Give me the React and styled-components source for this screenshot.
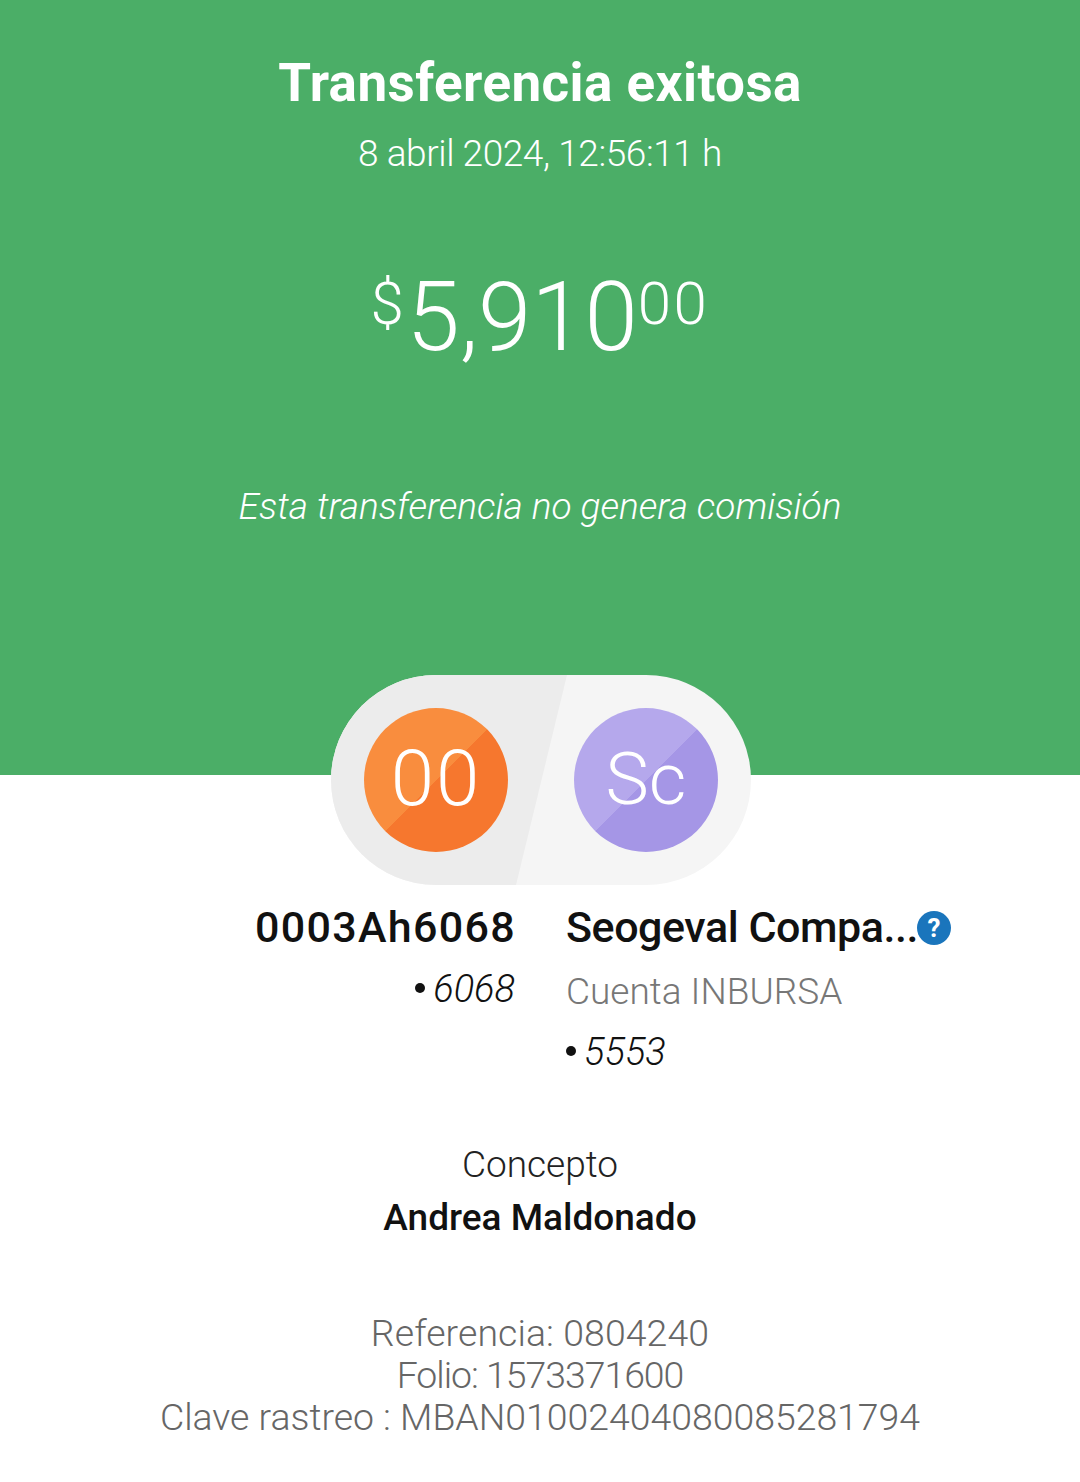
import React from 'react';
import styled, { createGlobalStyle } from 'styled-components';

const GlobalStyle = createGlobalStyle`
  html, body {
    margin: 0;
    padding: 0;
    background: #fff;
  }
  body {
    font-family: 'Roboto', 'Liberation Sans', sans-serif;
  }
`;

const App = () => {
  return (
    <Page>
      <GlobalStyle />
      <Header>
        <Title>Transferencia exitosa</Title>
        <DateText>8 abril 2024, 12:56:11 h</DateText>
        <Amount>
          <Sup>$</Sup>5,910<Sup>00</Sup>
        </Amount>
        <Note>Esta transferencia no genera comisión</Note>
      </Header>
      <Pill>
        <Avatar $light="#f98d3e" $dark="#f6772e" $size={78} $spacing={2}>00</Avatar>
        <Avatar $light="#b5a8ec" $dark="#a596e6" $size={73} $spacing={0}>Sc</Avatar>
      </Pill>
      <Accounts>
        <FromCol>
          <AccountName $spacing={1.3}>0003Ah6068</AccountName>
          <Digits $top={10}>6068</Digits>
        </FromCol>
        <ToCol>
          <NameRow>
            <AccountName $spacing={-0.45}>Seogeval Compa...</AccountName>
            <HelpIcon>?</HelpIcon>
          </NameRow>
          <Bank>Cuenta INBURSA</Bank>
          <Digits $top={8}>5553</Digits>
        </ToCol>
      </Accounts>
      <Concept>
        <ConceptLabel>Concepto</ConceptLabel>
        <ConceptValue>Andrea Maldonado</ConceptValue>
      </Concept>
      <Details>
        <DetailRow $spacing={0.1}>Referencia: 0804240</DetailRow>
        <DetailRow $spacing={-1}>Folio: 1573371600</DetailRow>
        <DetailRow $spacing={0}>Clave rastreo : MBAN01002404080085281794</DetailRow>
      </Details>
    </Page>
  );
};

const Page = styled.div`
  width: 1080px;
  height: 1482px;
  overflow: hidden;
  background: #fff;
`;

const Header = styled.div`
  box-sizing: border-box;
  height: 775px;
  padding-top: 54px;
  background: #4bae67;
  color: #fff;
  text-align: center;
`;

const Title = styled.div`
  font-size: 53px;
  font-weight: 700;
  line-height: 58px;
  letter-spacing: 0.43px;
`;

const DateText = styled.div`
  margin-top: 20px;
  font-size: 37px;
  font-weight: 300;
  line-height: 44px;
  letter-spacing: -0.43px;
`;

const Amount = styled.div`
  margin-top: 86px;
  font-size: 96px;
  font-weight: 300;
  line-height: 110px;
`;

const Sup = styled.span`
  position: relative;
  top: -26px;
  font-size: 60px;
  letter-spacing: 2.5px;
`;

const Note = styled.div`
  margin-top: 100px;
  font-size: 37px;
  font-style: italic;
  font-weight: 300;
  line-height: 44px;
`;

const Pill = styled.div`
  position: relative;
  box-sizing: border-box;
  display: flex;
  justify-content: space-between;
  align-items: center;
  width: 420px;
  height: 210px;
  margin: -100px 0 0 331px;
  padding: 0 33px;
  border-radius: 105px;
  background: #f5f5f5;
  overflow: hidden;

  &:before {
    content: '';
    position: absolute;
    top: 0;
    left: 0;
    width: 236px;
    height: 100%;
    background: #ececec;
    clip-path: polygon(0 0, 100% 0, 185px 100%, 0 100%);
  }
`;

const Avatar = styled.div`
  position: relative;
  width: 144px;
  height: 144px;
  border-radius: 50%;
  background: linear-gradient(135deg, ${props => props.$light} 50%, ${props => props.$dark} 50%);
  font-size: ${props => props.$size}px;
  font-weight: 300;
  letter-spacing: ${props => props.$spacing}px;
  line-height: 142px;
  color: #fff;
  text-align: center;
`;

const Accounts = styled.div`
  display: flex;
  margin-top: 16px;
`;

const FromCol = styled.div`
  box-sizing: border-box;
  width: 515px;
  text-align: right;
`;

const ToCol = styled.div`
  margin-left: 51px;
`;

const NameRow = styled.div`
  display: flex;
  align-items: center;
`;

const AccountName = styled.div`
  margin-right: -1px;
  font-size: 43px;
  font-weight: 500;
  letter-spacing: ${props => props.$spacing}px;
  line-height: 52px;
  color: #111;
`;

const HelpIcon = styled.div`
  width: 34px;
  height: 34px;
  margin-top: 2px;
  border-radius: 50%;
  background: #1a75bc;
  font-size: 26px;
  font-weight: 700;
  line-height: 34px;
  color: #fff;
  text-align: center;
`;

const Digits = styled.div`
  margin-top: ${props => props.$top}px;
  font-size: 38px;
  font-style: italic;
  font-weight: 300;
  line-height: 52px;
  color: #111;

  &:before {
    content: '';
    display: inline-block;
    width: 10px;
    height: 10px;
    margin-right: 8px;
    border-radius: 50%;
    background: #111;
    vertical-align: 9px;
  }
`;

const Bank = styled.div`
  margin-top: 13px;
  font-size: 37px;
  font-weight: 300;
  line-height: 52px;
  color: #777;
`;

const Concept = styled.div`
  margin-top: 61px;
  text-align: center;
`;

const ConceptLabel = styled.div`
  font-size: 37px;
  font-weight: 300;
  line-height: 52px;
  color: #222;
`;

const ConceptValue = styled.div`
  font-size: 37px;
  font-weight: 500;
  line-height: 53px;
  color: #111;
`;

const Details = styled.div`
  margin-top: 68px;
  font-size: 37.4px;
  font-weight: 300;
  line-height: 42px;
  color: #666;
  text-align: center;
`;

const DetailRow = styled.div`
  letter-spacing: ${props => props.$spacing}px;
`;

export default App;
